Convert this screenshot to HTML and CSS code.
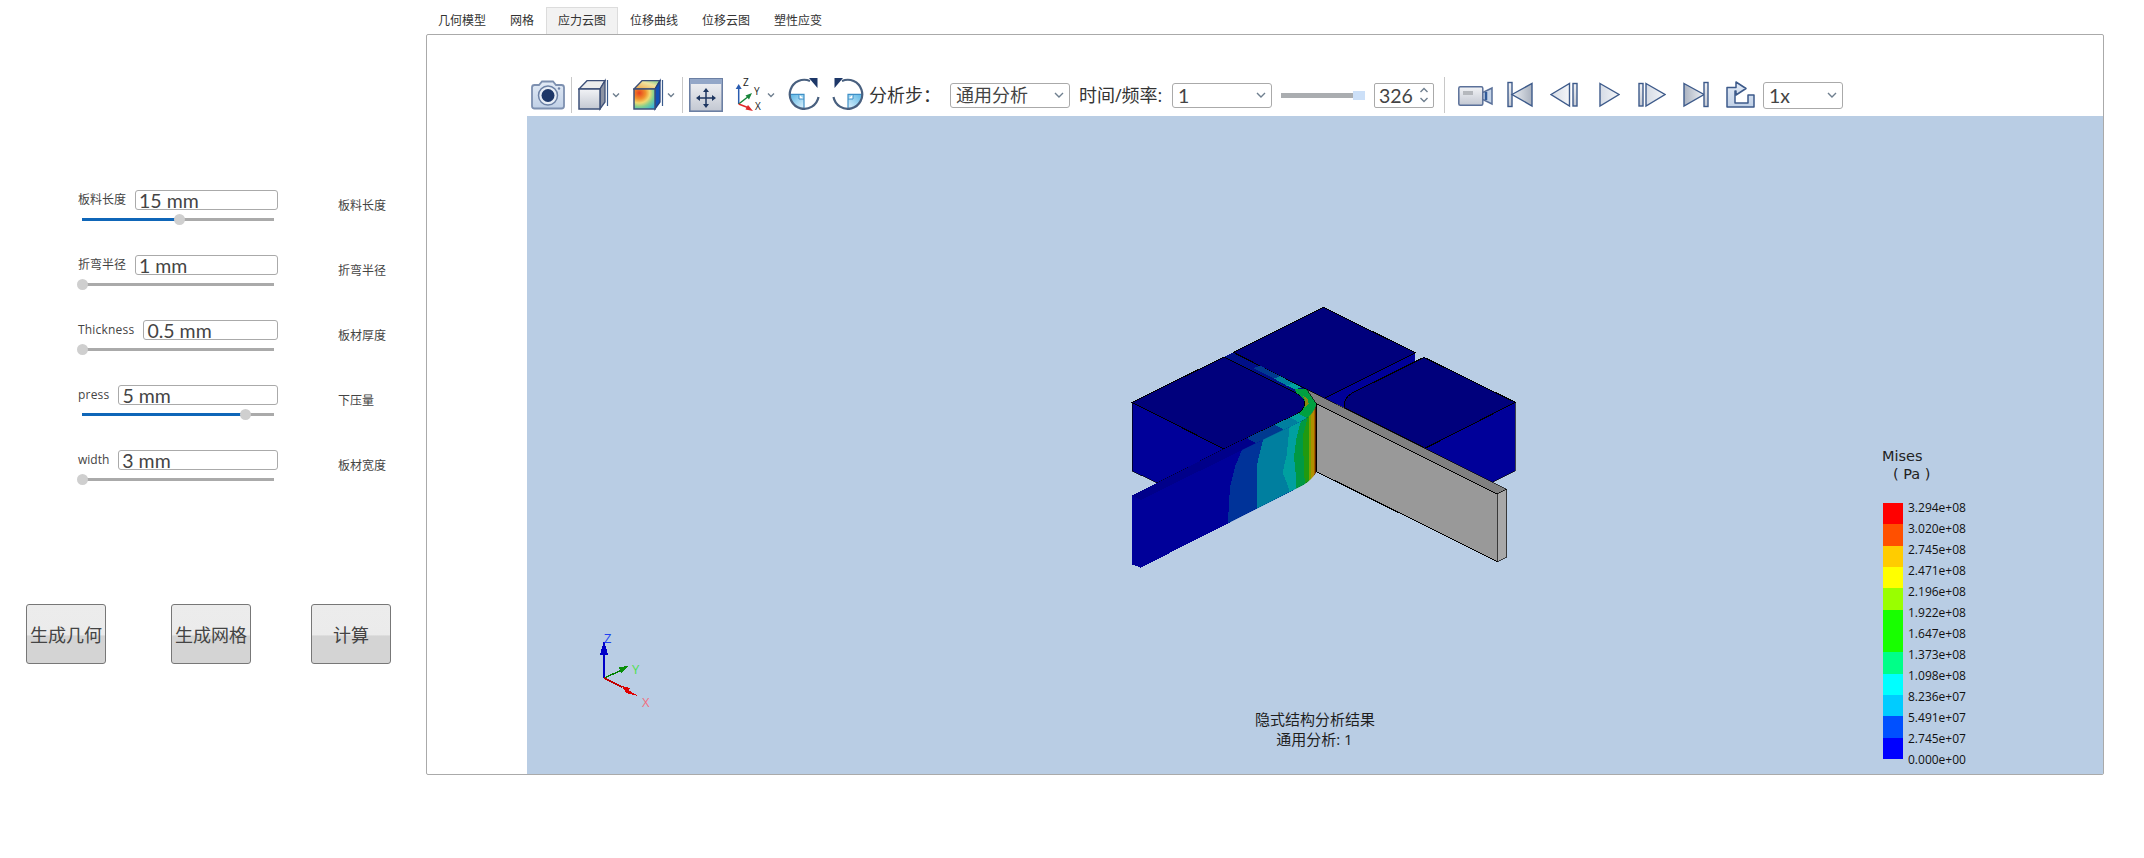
FILE: index.html
```html
<!DOCTYPE html>
<html lang="zh">
<head>
<meta charset="utf-8">
<title>隐式结构分析结果</title>
<link rel="stylesheet" href="styles.css">
</head>
<body>
<svg class="defs" aria-hidden="true">
  <defs>
    <linearGradient id="gMetal" x1="0" y1="0" x2="0" y2="1"><stop offset="0" stop-color="#f2f3f6"/><stop offset="1" stop-color="#c3c8d2"/></linearGradient>
    <linearGradient id="gBlue" x1="0" y1="0" x2="0" y2="1"><stop offset="0" stop-color="#e3ebf6"/><stop offset="1" stop-color="#c0d0e6"/></linearGradient>
    <linearGradient id="gTriL" x1="0" y1="0" x2="1" y2="0"><stop offset="0" stop-color="#eef1f5"/><stop offset="1" stop-color="#a9b1be"/></linearGradient>
    <linearGradient id="gTriR" x1="0" y1="0" x2="1" y2="0"><stop offset="0" stop-color="#d5dbe5"/><stop offset="1" stop-color="#f4f6f9"/></linearGradient>
    <linearGradient id="gDark" x1="0" y1="0" x2="1" y2="0"><stop offset="0" stop-color="#aab2c0"/><stop offset="1" stop-color="#eef1f5"/></linearGradient>
    <linearGradient id="gQuarter" x1="0" y1="0" x2="1" y2="1"><stop offset="0" stop-color="#55b4e4"/><stop offset="1" stop-color="#e0f2fc"/></linearGradient>
    <radialGradient id="gHeat" cx="0.25" cy="0.2" r="1"><stop offset="0" stop-color="#e8401f"/><stop offset="0.3" stop-color="#f0902c"/><stop offset="0.5" stop-color="#f0d870"/><stop offset="0.7" stop-color="#80d090"/><stop offset="1" stop-color="#30b0e0"/></radialGradient>
    <linearGradient id="gHeatTop" x1="0" y1="1" x2="1" y2="0"><stop offset="0" stop-color="#f0a040"/><stop offset="0.6" stop-color="#f0e4a0"/><stop offset="1" stop-color="#70c890"/></linearGradient>
    <clipPath id="stripClip"><path d="M36 587L62 600L340 463L550 360Q580 345 590 312V515Q575 540 550 555L62 803L36 793Z"/></clipPath>
  </defs>
</svg>

<div class="app">
  <aside class="side">
    <div class="params">
      <div class="row">
        <div class="param">
          <div class="head"><label class="plabel">板料长度</label><input class="pinput" value="15 mm"></div>
          <div class="track"><div class="fill" style="width:50.5%"><span class="thumb"></span></div></div>
        </div>
        <span class="note">板料长度</span>
      </div>
      <div class="row">
        <div class="param">
          <div class="head"><label class="plabel">折弯半径</label><input class="pinput" value="1 mm"></div>
          <div class="track"><div class="fill" style="width:0%"><span class="thumb"></span></div></div>
        </div>
        <span class="note">折弯半径</span>
      </div>
      <div class="row">
        <div class="param">
          <div class="head"><label class="plabel plabel-en">Thickness</label><input class="pinput" value="0.5 mm"></div>
          <div class="track"><div class="fill" style="width:0%"><span class="thumb"></span></div></div>
        </div>
        <span class="note">板材厚度</span>
      </div>
      <div class="row">
        <div class="param">
          <div class="head"><label class="plabel plabel-en">press</label><input class="pinput" value="5 mm"></div>
          <div class="track"><div class="fill" style="width:85%"><span class="thumb"></span></div></div>
        </div>
        <span class="note">下压量</span>
      </div>
      <div class="row">
        <div class="param">
          <div class="head"><label class="plabel">width</label><input class="pinput" value="3 mm"></div>
          <div class="track"><div class="fill" style="width:0%"><span class="thumb"></span></div></div>
        </div>
        <span class="note">板材宽度</span>
      </div>
    </div>
    <div class="actions">
      <button class="btn">生成几何</button>
      <button class="btn btn-mesh">生成网格</button>
      <button class="btn btn-calc">计算</button>
    </div>
  </aside>

  <main class="main">
    <nav class="tabs">
      <span class="tab">几何模型</span>
      <span class="tab">网格</span>
      <span class="tab tab-active">应力云图</span>
      <span class="tab">位移曲线</span>
      <span class="tab">位移云图</span>
      <span class="tab">塑性应变</span>
    </nav>
    <section class="panel">
      <div class="toolbar">
        <svg class="ico w34 m4" viewBox="0 0 34 34">
          <path d="M1 9.500Q1 7 3.500 7H8L11 3.500H22L25 7H30.500Q33 7 33 9.500V28Q33 30.500 30.500 30.500H3.500Q1 30.500 1 28Z" fill="url(#gBlue)" stroke="#7d90b0" stroke-width="1.800"/>
          <circle cx="17" cy="17.500" r="9.500" fill="#e8eef6" stroke="#6d82a6" stroke-width="1.500"/>
          <circle cx="17" cy="17.500" r="6.500" fill="#1d3768"/>
          <circle cx="28" cy="10.500" r="1.200" fill="#6d82a6"/>
        </svg>
        <span class="sep m6"></span>
        <svg class="ico w42 m6" viewBox="0 0 42 34">
          <path d="M1 11L9 2.700H27L22 11Z" fill="#eceded" stroke="#3d5078" stroke-width="1.300"/>
          <path d="M22 11L27 2.700V24L22 31Z" fill="#8c93a3" stroke="#3d5078" stroke-width="1.300"/>
          <rect x="1" y="11" width="21" height="20" fill="url(#gMetal)" stroke="#3d5078" stroke-width="1.500"/>
          <path d="M29.500 2V28" stroke="#3a5a8c" stroke-width="1.200"/>
          <path d="M35 15.500L38 18.500L41 15.500" class="chev"/>
        </svg>
        <svg class="ico w42 m13" viewBox="0 0 42 34">
          <path d="M1 11L9 2.700H27L22 11Z" fill="url(#gHeatTop)" stroke="#3d5078" stroke-width="1.300"/>
          <path d="M22 11L27 2.700V24L22 31Z" fill="#1250b8" stroke="#26407a" stroke-width="1.300"/>
          <rect x="1" y="11" width="21" height="20" fill="url(#gHeat)" stroke="#3d5078" stroke-width="1.500"/>
          <path d="M29.500 2V28" stroke="#3a5a8c" stroke-width="1.200"/>
          <path d="M35 15.500L38 18.500L41 15.500" class="chev"/>
        </svg>
        <span class="sep m7"></span>
        <svg class="ico w34 m6" viewBox="0 0 34 34">
          <rect x="0.800" y="0.800" width="32.400" height="32.400" fill="url(#gMetal)" stroke="#6b7fa3" stroke-width="1.600"/>
          <rect x="1" y="1" width="32" height="5" fill="#93a7c8"/>
          <path d="M17 12V28M9 20H25" stroke="#1e3660" stroke-width="1.500"/>
          <path d="M17 10L14 14H20ZM17 30L14 26H20ZM7 20L11 17V23ZM27 20L23 17V23Z" fill="#1e3660"/>
        </svg>
        <svg class="ico axis w41 m12" viewBox="0 -4 41 38">
          <path d="M3.700 26V9" stroke="#2a5cb0" stroke-width="1.500"/><path d="M3.700 6L0.700 11H6.700Z" fill="#2a5cb0"/>
          <path d="M3.700 26L14 18" stroke="#17853a" stroke-width="1.500"/><path d="M17 15L10.500 17.500L14 21.500Z" fill="#17853a"/>
          <path d="M3.700 26L14 30" stroke="#e02a2a" stroke-width="1.500"/><path d="M18 33L10.500 31.500L13 27Z" fill="#e02a2a"/>
          <text x="8" y="8" class="axtxt">Z</text><text x="19" y="17" class="axtxt">Y</text><text x="20" y="32" class="axtxt">X</text>
          <path d="M33 15.500L36 18.500L39 15.500" class="chev"/>
        </svg>
        <svg class="ico w32 m12" viewBox="0 0 32 34">
          <path d="M1.500 16.300H16V30.800A14.500 14.500 0 0 1 1.500 16.300Z" fill="url(#gQuarter)"/>
          <path d="M11 16.500V21H16" fill="#fff" stroke="#3e8fc6" stroke-width="1"/>
          <path d="M1.500 16.300H16V30.800" fill="none" stroke="#3e8fc6" stroke-width="1.200"/>
          <path d="M30.500 19A14.500 14.500 0 1 1 22 3" fill="none" stroke="#49607f" stroke-width="2.200"/>
          <path d="M21 0L29.500 10V0Z" fill="#1d3768"/>
        </svg>
        <svg class="ico w32 m12" viewBox="0 0 32 34">
          <g transform="translate(32 0) scale(-1 1)">
            <path d="M1.500 16.300H16V30.800A14.500 14.500 0 0 1 1.500 16.300Z" fill="url(#gQuarter)"/>
            <path d="M11 16.500V21H16" fill="#fff" stroke="#3e8fc6" stroke-width="1"/>
            <path d="M1.500 16.300H16V30.800" fill="none" stroke="#3e8fc6" stroke-width="1.200"/>
            <path d="M30.500 19A14.500 14.500 0 1 1 22 3" fill="none" stroke="#49607f" stroke-width="2.200"/>
            <path d="M21 0L29.500 10V0Z" fill="#1d3768"/>
          </g>
        </svg>
        <span class="tlabel lab-step">分析步：</span>
        <div class="sel sel-step m9"><span>通用分析</span><svg class="selchev" viewBox="0 0 10 6"><path d="M1 1L5 5L9 1" class="chev"/></svg></div>
        <span class="tlabel lab-time">时间/频率:</span>
        <div class="sel sel-time m10"><span>1</span><svg class="selchev" viewBox="0 0 10 6"><path d="M1 1L5 5L9 1" class="chev"/></svg></div>
        <div class="range m9"><span class="range-thumb"></span></div>
        <div class="num m9"><span>326</span>
          <svg class="spin" viewBox="0 0 10 18"><path d="M1.500 6L5 2.500L8.500 6M1.500 12L5 15.500L8.500 12" class="chev"/></svg>
        </div>
        <span class="sep m10"></span>
        <svg class="ico w35 m13" viewBox="0 0 35 34">
          <rect x="0.800" y="8.800" width="24" height="18.500" rx="1.500" fill="url(#gMetal)" stroke="#5a7099" stroke-width="1.500"/>
          <rect x="5" y="13" width="10" height="4" fill="#b5b8bd"/>
          <path d="M24.800 14.500L34 10V26L24.800 21.500Z" fill="#c5d4e8" stroke="#5a7099" stroke-width="1.500"/>
          <path d="M28 14V22" stroke="#2f5a9a" stroke-width="2.500"/>
        </svg>
        <svg class="ico w26 m14" viewBox="0 0 26 34">
          <rect x="1" y="4.500" width="4" height="24" fill="url(#gMetal)" stroke="#3d5a8a" stroke-width="1.400"/>
          <path d="M5 16.500L25 5.500V28Z" fill="url(#gTriL)" stroke="#3d5a8a" stroke-width="1.400"/>
        </svg>
        <svg class="ico w28 m17" viewBox="0 0 28 34">
          <path d="M1 16.500L19.500 5.500V28Z" fill="url(#gTriR)" stroke="#3d5a8a" stroke-width="1.400"/>
          <rect x="23" y="5.500" width="4" height="22.500" fill="url(#gMetal)" stroke="#3d5a8a" stroke-width="1.400"/>
        </svg>
        <svg class="ico w21 m21" viewBox="0 0 21 34">
          <path d="M1 5.500L20 16.500L1 28Z" fill="url(#gTriR)" stroke="#3d5a8a" stroke-width="1.400"/>
        </svg>
        <svg class="ico w28 m18" viewBox="0 0 28 34">
          <rect x="1" y="5.500" width="4" height="22.500" fill="url(#gMetal)" stroke="#3d5a8a" stroke-width="1.400"/>
          <path d="M8 5.500L27 16.500L8 28Z" fill="url(#gTriR)" stroke="#3d5a8a" stroke-width="1.400"/>
        </svg>
        <svg class="ico w26 m17" viewBox="0 0 26 34">
          <path d="M1 5.500L21 16.500L1 28Z" fill="url(#gDark)" stroke="#3d5a8a" stroke-width="1.400"/>
          <rect x="21" y="4.500" width="4" height="24" fill="url(#gMetal)" stroke="#3d5a8a" stroke-width="1.400"/>
        </svg>
        <svg class="ico w29 m17" viewBox="0 0 29 34">
          <path d="M1 9.500H10V4L20 10.500L10 17V13H9V25H22V17H28V29H1Z" fill="url(#gBlue)" stroke="#3d5a8a" stroke-width="1.500" stroke-linejoin="round"/>
        </svg>
        <div class="sel sel-speed m8"><span>1x</span><svg class="selchev" viewBox="0 0 10 6"><path d="M1 1L5 5L9 1" class="chev"/></svg></div>
      </div>

      <div class="view">
        <svg class="model" viewBox="0 0 1260 840" shape-rendering="crispEdges">
          <path d="M36 307L312 447L112 549L36 513Z" fill="#000099" stroke="#000" stroke-width="2"/>
          <path d="M612 295L886 158V183L700 276Q672 290 672 322Z" fill="#000099"/>
          <path d="M915 445L1186 307V513L1115 548Z" fill="#000099" stroke="#000" stroke-width="2"/>
          <path d="M312 171L340 157L612 295L560 300L530 280Z" fill="#000f88"/>
          <path d="M340 157L610 22L886 158L612 295Z" fill="#00007c" stroke="#000" stroke-width="3"/>
          <path d="M36 307L312 171L530 280Q555 292 555 312Q552 332 525 345L312 447Z" fill="#00007c" stroke="#000" stroke-width="3"/>
          <path d="M912 172L1186 307L915 445L672 322Q670 296 695 280Z" fill="#00007c" stroke="#000" stroke-width="3"/>
          <path d="M400 205L420 197L480 228L462 236Z" fill="#003a90"/>
          <path d="M462 236L480 228L520 250L500 257Z" fill="#007f9f"/>
          <path d="M500 257L520 250L545 262L525 268Z" fill="#00a0a0"/>
          <path d="M525 268L560 268L590 312V335Q580 350 563 356L535 340Q552 332 555 312Q555 292 530 280Z" fill="#00a040"/>
          <path d="M548 286L562 296L566 312L556 322Q558 300 548 286Z" fill="#8a8a10"/>
          <path d="M36 587L312 447L408 430L62 600Z" fill="#00008a"/>
          <path d="M312 447L380 414L408 430L340 463Z" fill="#00008a"/>
          <path d="M380 414L465 374L493 390L408 430Z" fill="#003a90"/>
          <path d="M465 374L510 352L538 368L493 390Z" fill="#007f9f"/>
          <path d="M510 352L535 340L563 356L538 368Z" fill="#00a0a0"/>
          <path d="M36 587L62 600L340 463L550 360Q580 345 590 312V515Q575 540 550 555L62 803L36 793Z" fill="#000099"/>
          <g clip-path="url(#stripClip)">
            <path d="M370 440L345 500L330 560L323 680L412 640L412 500L435 410L470 380Z" fill="#003399"/>
            <path d="M435 395L412 490L412 640L510 590L505 560L488 518L500 465L510 370Z" fill="#007f9f"/>
            <path d="M510 370L500 465L488 518L505 560L510 590L530 580L528 530L522 470L530 410L545 355Z" fill="#00a0a0"/>
            <path d="M545 355L530 410L522 470L528 530L530 580L555 560L552 500L548 410L565 345Z" fill="#009944"/>
            <path d="M565 345L548 410L552 500L555 570H566V340Z" fill="#209a10"/>
            <path d="M566 335H574V560H566Z" fill="#7aa000"/>
            <path d="M574 330H581V560H574Z" fill="#b09000"/>
            <path d="M581 325H586V560H581Z" fill="#a86000"/>
            <path d="M586 315H592V560H586Z" fill="#5a2500"/>
          </g>
          <path d="M560 268L1160 568L1132 582L590 312Z" fill="#808080" stroke="#000" stroke-width="2"/>
          <path d="M590 312L1132 582V785L590 515Z" fill="#999" stroke="#000" stroke-width="3"/>
          <path d="M1132 582L1160 568V772L1132 785Z" fill="#a8a8a8" stroke="#000" stroke-width="2"/>
        </svg>

        <svg class="triad" viewBox="0 0 120 100" shape-rendering="crispEdges">
          <path d="M44 58V24" stroke="#0000c8" stroke-width="2"/>
          <path d="M44 20L40 35H48Z" fill="#0000c8"/>
          <path d="M44 58L62 50" stroke="#008000" stroke-width="1.500"/>
          <path d="M69 46L59 47L61 53Z" fill="#0a8f0a"/>
          <path d="M44 58L62 67" stroke="#c00000" stroke-width="1.500"/>
          <path d="M78 76L62 66L66 73Z" fill="#e00000"/>
          <path d="M66 72L62 66L70 68Z" fill="#e00000"/>
          <text x="44" y="23" class="tz">Z</text>
          <text x="72" y="54" class="ty">Y</text>
          <text x="82" y="87" class="tx">X</text>
        </svg>

        <div class="caption">
          <div>隐式结构分析结果</div>
          <div>通用分析: 1</div>
        </div>

        <div class="legend">
          <div class="ltitle">Mises<br><span class="lunit">( Pa )</span></div>
          <div class="lbody">
            <div class="bar">
              <span class="c1"></span><span class="c2"></span><span class="c3"></span><span class="c4"></span><span class="c5"></span><span class="c6"></span><span class="c7"></span><span class="c8"></span><span class="c9"></span><span class="c10"></span><span class="c11"></span><span class="c12"></span>
            </div>
            <div class="vals">
              <span>3.294e+08</span><span>3.020e+08</span><span>2.745e+08</span><span>2.471e+08</span><span>2.196e+08</span><span>1.922e+08</span><span>1.647e+08</span><span>1.373e+08</span><span>1.098e+08</span><span>8.236e+07</span><span>5.491e+07</span><span>2.745e+07</span><span>0.000e+00</span>
            </div>
          </div>
        </div>
      </div>
    </section>
  </main>
</div>
</body>
</html>
```

FILE: styles.css
```css
* { box-sizing: border-box; }
html, body { margin: 0; padding: 0; background: #fff; }
body {
  width: 2144px;
  height: 858px;
  overflow: hidden;
  font-family: "Open Sans", "Noto Sans CJK SC", sans-serif;
  color: #333;
}
.defs { position: absolute; width: 0; height: 0; }
.app { display: flex; height: 858px; }

/* sidebar */
.side { width: 426px; flex: none; }
.params { margin: 190px 0 0 78px; }
.row { display: flex; height: 65px; }
.param { width: 200px; }
.head { display: flex; align-items: center; gap: 9px; height: 20px; }
.plabel { font-size: 12px; line-height: 16px; white-space: nowrap; color: #444; }
.plabel-en { letter-spacing: 0.2px; }
.pinput {
  flex: 1;
  min-width: 0;
  height: 20px;
  padding: 0 3px;
  border: 1px solid #aaa;
  border-radius: 3px;
  font: 19.500px/17px Lato, "Open Sans", sans-serif;
  color: #444;
  background: #fff;
  outline: none;
}
.track { height: 3px; margin: 8px 4px 0; background: #aaa; }
.fill { position: relative; height: 3px; background: #0f66b8; }
.thumb {
  position: absolute;
  right: -6px;
  top: -4px;
  width: 11px;
  height: 11px;
  border-radius: 50%;
  background: #cfcfcf;
}
.note { margin: 8px 0 0 60px; font-size: 12px; line-height: 16px; color: #444; }
.actions { display: flex; margin-top: 89px; padding-left: 26px; }
.btn {
  width: 80px;
  height: 60px;
  padding: 0;
  border: 1px solid #777;
  border-radius: 3px;
  background: linear-gradient(#ececec 0, #ebebeb 52%, #d4d4d4 53%, #d4d4d4 100%);
  font: 18px "Open Sans", "Noto Sans CJK SC", sans-serif;
  color: #444;
}
.btn-mesh { margin-left: 65px; }
.btn-calc { margin-left: 60px; }

/* main */
.main { width: 1678px; flex: none; padding-top: 7px; }
.tabs { display: flex; height: 27px; }
.tab { padding: 0 12px; font-size: 12px; line-height: 28px; color: #333; }
.tab-active { background: #f2f2f2; border: 1px solid #dcdcdc; border-bottom: 0; padding: 0 11px; line-height: 26px; }
.panel {
  height: 741px;
  border: 1px solid #aaa;
  border-radius: 2px;
  display: flex;
  flex-direction: column;
}

/* toolbar */
.toolbar {
  display: flex;
  align-items: center;
  height: 81px;
  padding: 43px 0 4px 100px;
  flex: none;
  font-size: 18px;
}
.ico { height: 34px; flex: none; display: block; }
.axis { height: 38px; margin-top: -4px; }
.w21 { width: 21px; } .w26 { width: 26px; } .w28 { width: 28px; } .w29 { width: 29px; }
.w32 { width: 32px; } .w34 { width: 34px; } .w35 { width: 35px; } .w41 { width: 41px; } .w42 { width: 42px; }
.m4 { margin-left: 4px; } .m6 { margin-left: 6px; } .m7 { margin-left: 7px; } .m8 { margin-left: 8px; }
.m9 { margin-left: 9px; } .m10 { margin-left: 10px; } .m12 { margin-left: 12px; } .m13 { margin-left: 13px; }
.m14 { margin-left: 14px; } .m17 { margin-left: 17px; } .m18 { margin-left: 18px; } .m21 { margin-left: 21px; }
.sep { width: 1px; height: 36px; background: #c8c8c8; flex: none; }
.chev { fill: none; stroke: #6f7f8f; stroke-width: 1.400; }
.axtxt { font: 10px "Open Sans", sans-serif; fill: #222; }
.tlabel { white-space: nowrap; color: #333; flex: none; line-height: 24px; }
.lab-step { width: 72px; margin-left: 5px; }
.lab-time { width: 83px; margin-left: 9px; }
.sel {
  display: flex;
  align-items: center;
  justify-content: space-between;
  height: 25px;
  padding: 0 5px;
  border: 1px solid #aaa;
  border-radius: 3px;
  flex: none;
  font: 19.500px/23px Lato, "Noto Sans CJK SC", sans-serif;
  color: #444;
}
.sel-step { width: 120px; font-size: 18px; }
.sel-time { width: 100px; }
.sel-speed { width: 80px; height: 27px; }
.selchev { width: 10px; height: 6px; }
.range { position: relative; width: 84px; height: 5px; background: #aaadb0; flex: none; }
.range-thumb { position: absolute; right: 0; top: -2px; width: 12px; height: 9px; background: #cce0f8; }
.num {
  display: flex;
  align-items: center;
  justify-content: space-between;
  width: 60px;
  height: 25px;
  padding: 0 4px;
  border: 1px solid #aaa;
  border-radius: 2px;
  flex: none;
  font: 19.500px/23px Lato, sans-serif;
  color: #444;
}
.spin { width: 10px; height: 18px; }

/* 3D view */
.view { position: relative; flex: 1; margin-left: 100px; background: #b9cde4; }
.model { position: absolute; left: 593px; top: 184px; width: 420px; height: 280px; }
.triad { position: absolute; left: 33px; top: 504px; width: 120px; height: 100px; }
.tz { font: 13px "Open Sans", sans-serif; fill: #2040f0; }
.ty { font: 13px "Open Sans", sans-serif; fill: #50e050; }
.tx { font: 13px "Open Sans", sans-serif; fill: #f07080; }
.caption {
  position: absolute;
  left: 728px;
  top: 593px;
  width: 119px;
  text-align: center;
  font-size: 15px;
  line-height: 20px;
  color: #1e1e1e;
  white-space: nowrap;
}
.legend { position: absolute; left: 1355px; top: 331px; color: #111; }
.ltitle { font: 14.500px/18px "DejaVu Sans", sans-serif; color: #222; }
.lunit { padding-left: 11px; }
.lbody { display: flex; margin-top: 20px; }
.bar { width: 20px; height: 256px; margin-left: 1px; display: flex; flex-direction: column; flex: none; }
.bar span { flex: 1; }
.c1 { background: #ff0000; } .c2 { background: #ff5000; } .c3 { background: #ffcc00; } .c4 { background: #ffff00; }
.c5 { background: #99ff00; } .c6, .c7 { background: #18ff00; } .c8 { background: #00ff88; } .c9 { background: #00ffff; }
.c10 { background: #00ccff; } .c11 { background: #0050ff; } .c12 { background: #0000ff; }
.vals { display: flex; flex-direction: column; margin: -6px 0 0 5px; font-size: 12px; }
.vals span { height: 21px; line-height: 21px; white-space: nowrap; }
```
